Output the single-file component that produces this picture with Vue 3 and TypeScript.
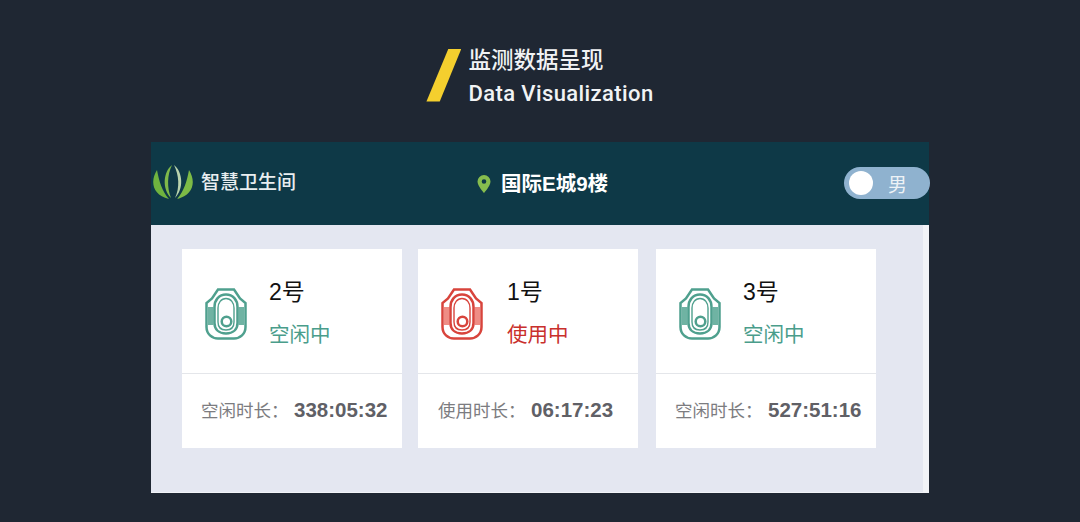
<script setup lang="ts">
interface Stall {
  no: string
  status: string
  label: string
  time: string
  busy: boolean
}

const stalls: Stall[] = [
  { no: '2号', status: '空闲中', label: '空闲时长：', time: '338:05:32', busy: false },
  { no: '1号', status: '使用中', label: '使用时长：', time: '06:17:23', busy: true },
  { no: '3号', status: '空闲中', label: '空闲时长：', time: '527:51:16', busy: false },
]
</script>

<template>
  <div class="page">
    <div class="title">
      <div class="slash"></div>
      <div class="title-text">
        <div class="title-cn">监测数据呈现</div>
        <div class="title-en">Data Visualization</div>
      </div>
    </div>

    <div class="panel">
      <div class="topbar">
        <div class="brand">
          <svg class="logo" viewBox="0 0 42 36" width="42" height="36">
            <path d="M20 1C11 8 10 25 19 34C15 24 15 11 20 1Z" fill="#7fb94a" />
            <path d="M22 1C31 8 32 25 23 34C28 24 27 11 22 1Z" fill="#b9d3ad" />
            <path d="M5 6C-2 17 0 31 17 35C10 27 7 17 5 6Z" fill="#6fb33f" />
            <path d="M37 6C44 17 42 31 25 35C32 27 35 17 37 6Z" fill="#7dbb46" />
          </svg>
          <span class="brand-name">智慧卫生间</span>
        </div>
        <div class="place">
          <svg class="pin" viewBox="0 0 14 18" width="14" height="18">
            <path fill-rule="evenodd" d="M7 0a6.500 6.500 0 0 0-6.500 6.500C.5 11 7 18 7 18s6.500-7 6.500-11.500A6.500 6.500 0 0 0 7 0Zm0 4.200a2.300 2.300 0 1 1 0 4.600 2.300 2.300 0 0 1 0-4.600Z" fill="#86bd4e" />
          </svg>
          <span>国际E城9楼</span>
        </div>
        <div class="toggle">
          <span class="knob"></span>
          <span class="toggle-label">男</span>
        </div>
      </div>

      <div class="body">
        <div class="cards">
          <div v-for="s in stalls" :key="s.no" class="card" :class="{ busy: s.busy }">
            <div class="card-top">
              <svg class="urinal" viewBox="0 0 44 54" width="44" height="54">
                <path class="line" d="M14 2.500H30L36 11.500 41.500 16V40C41.500 47 36 51.500 30 51.500H14C8 51.500 2.500 47 2.500 40V16L8 11.500Z" />
                <path class="fill" d="M4 20H9.500V38H4ZM34.500 20H40V38H34.500Z" />
                <path class="line" d="M22 7.500C29 7.500 33.500 13 33.500 20V36C33.500 42.500 29 46.500 22 46.500C15 46.500 10.500 42.500 10.500 36V20C10.500 13 15 7.500 22 7.500Z" />
                <path class="line thin" d="M22 11.500C27 11.500 30 16 30 21V35C30 40 27 43 22 43C17 43 14 40 14 35V21C14 16 17 11.500 22 11.500Z" />
                <circle class="line" cx="22.500" cy="34.500" r="4.800" />
              </svg>
              <div class="info">
                <div class="no">{{ s.no }}</div>
                <div class="status">{{ s.status }}</div>
              </div>
            </div>
            <div class="card-bottom">
              <span class="label">{{ s.label }}</span>
              <span class="time">{{ s.time }}</span>
            </div>
          </div>
        </div>
        <div class="scroll-strip"></div>
      </div>
    </div>
  </div>
</template>

<style>
html,
body {
  margin: 0;
  background: #1f2733;
}
</style>

<style scoped>
.page {
  width: 1080px;
  height: 522px;
  background: #1f2733;
  overflow: hidden;
  display: flex;
  flex-direction: column;
  align-items: center;
  font-family: "Liberation Sans", "Noto Sans CJK SC", sans-serif;
}

.title {
  display: flex;
  align-items: center;
  gap: 7px;
  margin-top: 46px;
  height: 58px;
}

.slash {
  width: 35px;
  height: 53px;
  background: #f4cf2e;
  clip-path: polygon(63% 0, 100% 0, 38% 100%, 0 100%);
}

.title-text {
  color: #f1f3f5;
}

.title-cn {
  font-size: 22.500px;
  line-height: 28px;
  font-weight: 500;
  margin-top: 5px;
}

.title-en {
  font-family: Roboto, "Liberation Sans", sans-serif;
  font-size: 22px;
  line-height: 30px;
  font-weight: 500;
  letter-spacing: 0.4px;
  margin-top: 4px;
}

.panel {
  width: 778px;
  height: 351px;
  margin-top: 38px;
  display: flex;
  flex-direction: column;
}

.topbar {
  height: 83px;
  background: #0e3947;
  display: flex;
  align-items: center;
  position: relative;
  color: #fff;
}

.brand {
  display: flex;
  align-items: center;
  gap: 7px;
  margin-top: -6px;
}

.logo {
  display: block;
  margin-left: 1px;
  margin-top: 3px;
}

.brand-name {
  font-size: 19px;
  font-weight: 500;
  color: #e9eef0;
}

.place {
  position: absolute;
  left: 326px;
  top: 29px;
  display: flex;
  align-items: center;
  gap: 10px;
  font-size: 20.500px;
  font-weight: 700;
  line-height: 26px;
}

.toggle {
  position: absolute;
  left: 693px;
  top: 25px;
  width: 86px;
  height: 32px;
  border-radius: 16px;
  background: #8fb2cf;
  display: flex;
  align-items: center;
  justify-content: flex-end;
  box-sizing: border-box;
  padding-right: 23px;
}

.knob {
  position: absolute;
  left: 5px;
  top: 4px;
  width: 24px;
  height: 24px;
  border-radius: 50%;
  background: #fff;
}

.toggle-label {
  font-size: 19px;
  color: #edf2f6;
}

.body {
  flex: 1;
  background: #e4e7f1;
  border-bottom: 1px solid #f1f3f7;
  display: flex;
  justify-content: space-between;
}

.cards {
  display: flex;
  gap: 16px;
  padding: 24px 0 0 31px;
}

.card {
  width: 220px;
  height: 199px;
  background: #fff;
  display: flex;
  flex-direction: column;
}

.card:last-child {
  margin-left: 2px;
}

.card-top {
  height: 125px;
  box-sizing: border-box;
  border-bottom: 1px solid #e4e6ea;
  display: flex;
  align-items: center;
  padding-left: 22px;
  gap: 21px;
}

.card.busy .card-top {
  gap: 23px;
}

.urinal {
  display: block;
  margin-top: 6px;
}

.urinal .line {
  fill: none;
  stroke: #4fa08e;
  stroke-width: 2.500;
}

.urinal .thin {
  stroke-width: 1.400;
}

.urinal .fill {
  fill: #6fb3a3;
}

.card.busy .urinal .line {
  stroke: #d8443c;
}

.card.busy .urinal .fill {
  fill: #ef8d85;
}

.info {
  margin-top: 5px;
}

.no {
  font-size: 23px;
  line-height: 30px;
  color: #111;
}

.status {
  font-size: 20.500px;
  line-height: 30px;
  margin-top: 13px;
  color: #4a9d8b;
}

.card.busy .status {
  color: #c9302c;
}

.card-bottom {
  flex: 1;
  display: flex;
  align-items: center;
  padding-left: 19px;
  padding-bottom: 2px;
}

.card.busy .card-bottom {
  padding-left: 20px;
}

.label {
  font-size: 17.500px;
  color: #7c7c80;
  width: 93px;
  white-space: nowrap;
  margin-top: -2px;
}

.time {
  font-size: 20.500px;
  font-weight: 700;
  color: #606066;
}

.scroll-strip {
  width: 6px;
  background: #f1f3f7;
}
</style>
